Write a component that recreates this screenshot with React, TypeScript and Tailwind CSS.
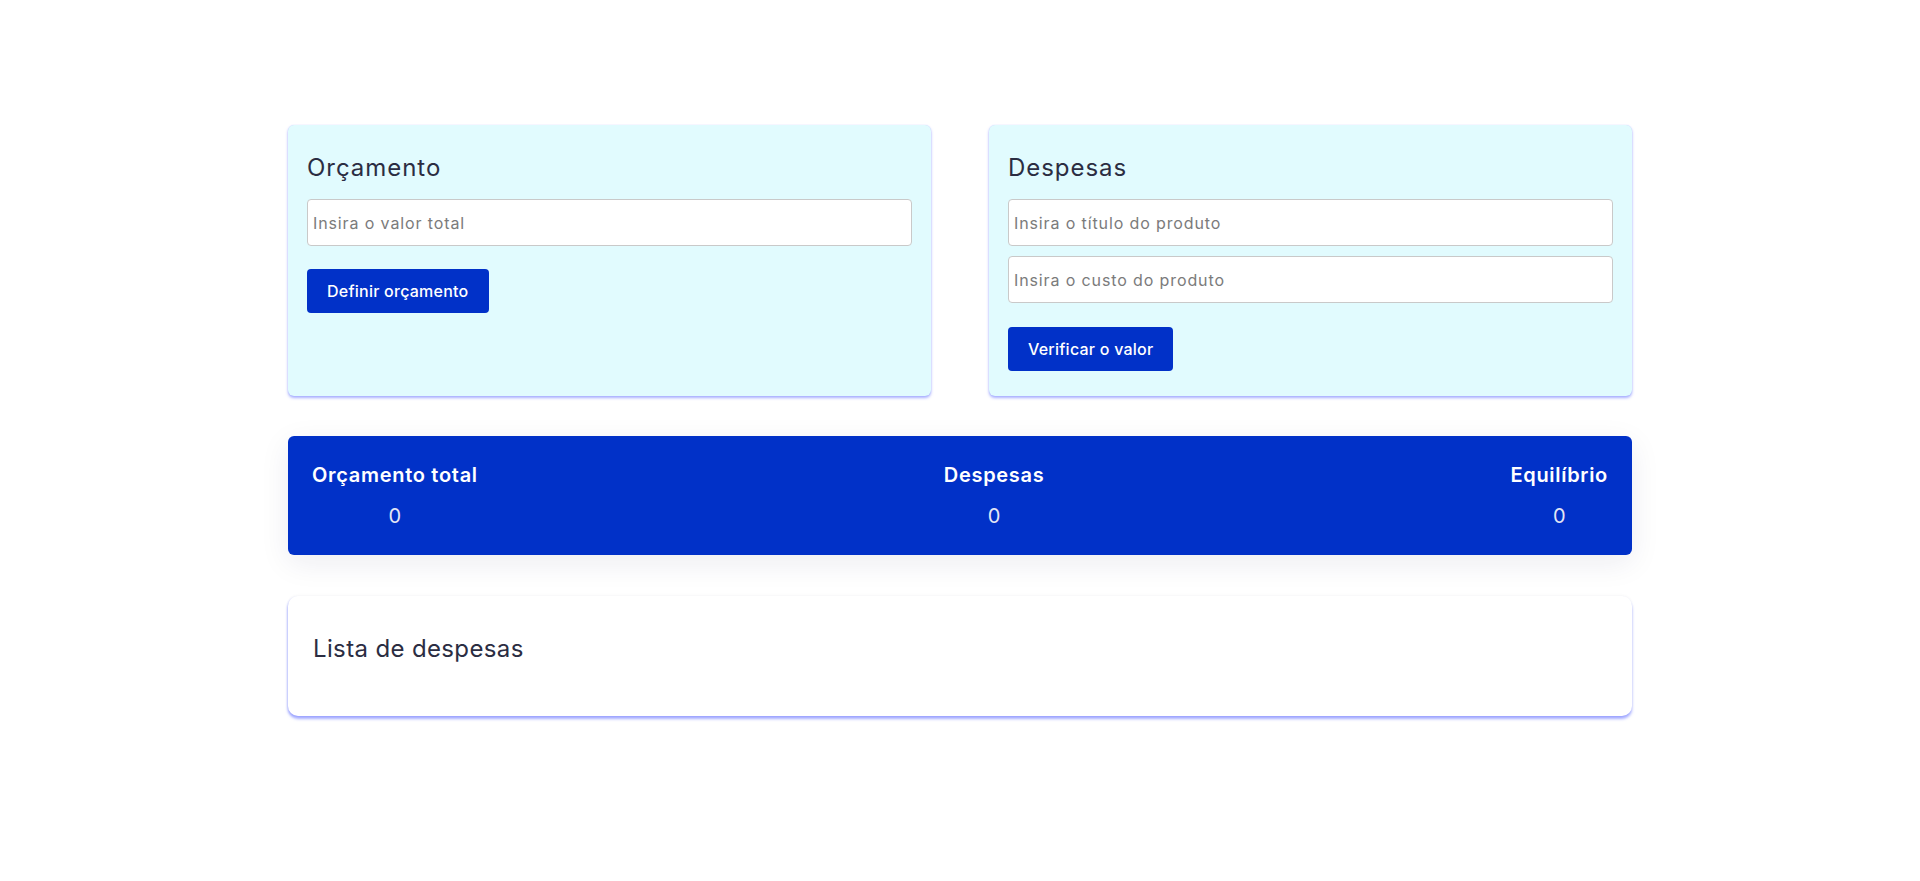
import React from 'react';

// Painel de orçamento: cartões de entrada, resumo e lista de despesas.

const cardClass =
    'bg-[#e1fbfe] rounded-md px-[19px] pt-[25px] pb-[25px] shadow-[0_2px_3px_rgba(96,110,255,0.55),0_0_1px_rgba(96,110,255,0.35)]';

const inputClass =
    'w-full h-[47px] rounded border border-[#c9c9c9] bg-white px-[5px] text-base tracking-[0.055em] text-[#333] placeholder:text-[#7b7b7b] outline-none';

const buttonClass =
    'h-[44px] px-5 rounded bg-[#0131c8] text-white text-base tracking-[0.015em] font-medium';

type StatProps = { label: string; value: number };

const Stat: React.FC<StatProps> = ({ label, value }) => (
    <div className="flex flex-col items-center gap-[11px]">
        <h3 className="text-xl leading-[30px] font-semibold tracking-[0.035em] text-white">{label}</h3>
        <p className="text-xl leading-[30px] text-[#e4e6f5]">{value}</p>
    </div>
);

export default function App() {
    return (
        <div className="min-h-screen bg-white font-['Inter',sans-serif] text-[#2b2d42]">
            <div className="w-[1344px] mx-auto pt-[125px] flex flex-col">
                <div className="grid grid-cols-2 gap-[58px]">
                    <div className={cardClass}>
                        <h2 className="text-2xl leading-9 tracking-[0.04em] mb-[13px]">Orçamento</h2>
                        <input className={inputClass} placeholder="Insira o valor total" />
                        <button className={`${buttonClass} mt-[23px]`}>Definir orçamento</button>
                    </div>
                    <div className={cardClass}>
                        <h2 className="text-2xl leading-9 tracking-[0.04em] mb-[13px]">Despesas</h2>
                        <div className="flex flex-col gap-[10px]">
                            <input className={inputClass} placeholder="Insira o título do produto" />
                            <input className={inputClass} placeholder="Insira o custo do produto" />
                        </div>
                        <button className={`${buttonClass} mt-[24px]`}>Verificar o valor</button>
                    </div>
                </div>

                <div className="mt-10 bg-[#0131c8] rounded-md px-6 py-6 flex justify-between shadow-[0_8px_30px_rgba(30,30,80,0.08)]">
                    <Stat label="Orçamento total" value={0} />
                    <Stat label="Despesas" value={0} />
                    <Stat label="Equilíbrio" value={0} />
                </div>

                <div className="mt-[41px] bg-white rounded-[10px] px-[25px] pt-[35px] pb-[49px] shadow-[0_3px_3px_rgba(96,110,255,0.55),-1px_1px_2px_rgba(96,110,255,0.2),0_-1px_3px_rgba(0,0,0,0.03)]">
                    <h2 className="text-2xl leading-9 tracking-[0.015em]">Lista de despesas</h2>
                </div>
            </div>
        </div>
    );
}
